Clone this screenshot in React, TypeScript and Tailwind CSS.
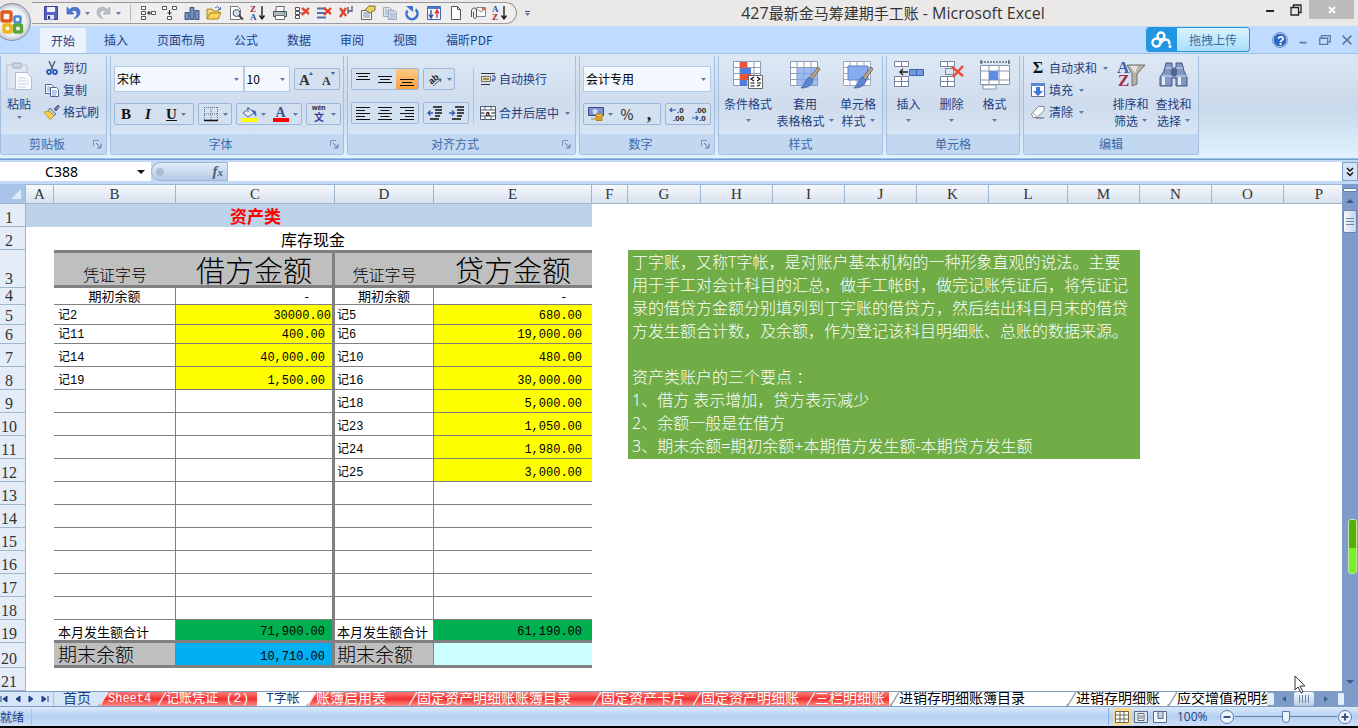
import { useState, type ReactNode } from 'react';

const Svg = ({ children, size = 'size-4', box = '0 0 16 16' }: { children: ReactNode; size?: string; box?: string }) => (
  <svg viewBox={box} className={`${size} shrink-0`} fill="none" aria-hidden="true">{children}</svg>
);

const Caret = () => (
  <svg viewBox="0 0 5 3" className="h-[3px] w-[5px] shrink-0" aria-hidden="true"><path d="M0 0h5L2.5 3z" fill="#5f7aa5" /></svg>
);

/* ---------- quick access icons ---------- */
const SaveIcon = () => <Svg><path d="M1.500 1.500h13v13h-13z" fill="#5a62c0" stroke="#3a3f96" /><path d="M4 2h8v5H4z" fill="#eef2fc" /><path d="M4 10h7v4.500H4z" fill="#dfe4f5" /><path d="M5 11h2v3H5z" fill="#2f3478" /></Svg>;
const UndoIcon = ({ gray }: { gray?: boolean }) => (
  <Svg><g transform={gray ? 'matrix(-1 0 0 1 16 0)' : undefined}><path d="M2 2v7h7L6.500 6.500C9 4.500 12 5.500 12 8.500c0 2-1 3.500-3 5 4-1 6-3 6-6.500C15 2.500 9 .5 4.500 4.500z" fill={gray ? '#b9bfc9' : '#4c78d6'} stroke={gray ? '#9aa2af' : '#2f57ae'} strokeWidth=".6" /></g></Svg>
);
const GroupRightIcon = () => <Svg><path d="M1.500 1.500h4v3h-4zM1.500 6.500h4v3h-4zM1.500 11.500h4v3h-4z" fill="#fff" stroke="#555" /><path d="M11.500 6.500h4v3h-4z" fill="#fff" stroke="#555" /><path d="M7 8h4M9 6v4" stroke="#222" /></Svg>;
const GroupDownIcon = () => <Svg><path d="M.5 1.500h4v3h-4zM10.500 1.500h4v3h-4zM5.500 11.500h4v3h-4z" fill="#fff" stroke="#555" /><path d="M7.500 5v5M5.500 8h4" stroke="#222" /></Svg>;
const ChartIcon = () => <Svg><path d="M1 7.500h4v7H1zM6 2.500h4v12H6zM11 5.500h4v9h-4z" fill="#7590bd" stroke="#3f5a8a" /></Svg>;
const OpenIcon = () => <Svg><path d="M1 14V4h5l1 2h6v3" fill="#f7dc82" stroke="#a8801f" /><path d="M1 14l3-6h11l-3 6z" fill="#ffd65a" stroke="#a8801f" /><path d="M9 3c2-2 4-1 4.500 1M14.500 2v2.500H12" stroke="#3a67b8" /></Svg>;
const PreviewIcon = () => <Svg><path d="M2.500 1.500h7l3 3v10h-10z" fill="#fff" stroke="#777" /><circle cx="8.500" cy="8" r="3.500" fill="#cfe0f5" stroke="#555" /><path d="M11 10.500l4 4" stroke="#444" strokeWidth="2" /></Svg>;
const SortIcon = ({ down }: { down?: boolean }) => (
  <Svg>
    <text x="0" y="7" fontSize="9" fontWeight="bold" fontFamily="Liberation Serif" fill={down ? '#a02340' : '#2b4f9e'}>{down ? 'Z' : 'A'}</text>
    <text x="0" y="15" fontSize="9" fontWeight="bold" fontFamily="Liberation Serif" fill={down ? '#2b4f9e' : '#a02340'}>{down ? 'A' : 'Z'}</text>
    <path d="M12 1v13M9.500 10.500L12 14l2.500-3.500" stroke="#111" strokeWidth="1.300" />
  </Svg>
);
const PrintIcon = () => <Svg><path d="M4.500 1.500h8l-1 5h-8z" fill="#fff" stroke="#666" /><path d="M1.500 6.500h13v5h-13z" fill="#b3bac4" stroke="#4f545c" /><path d="M3.500 10.500h9v4h-9z" fill="#fff" stroke="#666" /><path d="M11 8h2" stroke="#3c3" strokeWidth="1.500" /></Svg>;
const RemoveIcon = ({ kind }: { kind: number }) => (
  <Svg>
    {kind === 0 && <path d="M1.500 2.500h4v3h-4zM1.500 6.500h4v3h-4zM1.500 10.500h4v3h-4zM6 8h4" fill="#fff" stroke="#556" />}
    {kind === 1 && <path d="M1 3.500h9M1 12.500h9M1 8h8" stroke="#4a6fb0" strokeWidth="2" />}
    {kind === 2 && <path d="M10 2v7M10 6h4V1" stroke="#556" strokeWidth="1.300" />}
    <path d={kind === 2 ? 'M2 3l6 8M8 3l-6 9' : 'M8 3l7 6M15 3L8 10'} stroke="#e2452f" strokeWidth="2.400" />
  </Svg>
);
const PropsIcon = () => <Svg><path d="M1.500 5.500h10v9h-10z" fill="#fff" stroke="#666" /><path d="M3 8h7M3 10h7M3 12h7" stroke="#6b84ad" /><path d="M5 5l4-4h6v4l-5 3z" fill="#e8d65c" stroke="#777134" /></Svg>;
const CopyIcon = ({ faded }: { faded?: boolean }) => (
  <Svg>
    <path d="M1.500 2.500h6l2 2v7h-8z" fill={faded ? '#d9e1ec' : '#fff'} stroke={faded ? '#9aa9c0' : '#4c6796'} />
    <path d="M6.500 5.500h6l2 2v7h-8z" fill={faded ? '#cdd7e5' : '#fff'} stroke={faded ? '#9aa9c0' : '#4c6796'} />
    <path d="M8 9h5M8 11h5M8 13h4M3 5h3M3 7h3M3 9h3" stroke={faded ? '#a5b5cd' : '#7b97c6'} />
  </Svg>
);
const RefreshIcon = () => <Svg><path d="M3.500 5.500a5.500 5.500 0 1 0 8-1" stroke="#3c72cf" strokeWidth="2.500" /><path d="M2 1h7v6z" fill="#3c72cf" /></Svg>;
const SwapIcon = () => <Svg><path d="M1.500 1.500h13v13h-13z" fill="#f3f7ff" stroke="#3b68b3" /><path d="M1 2h14v2H1z" fill="#4b7bc9" /><path d="M5 5v7M3 9.500L5 13l2-3.500" stroke="#2b55a5" strokeWidth="1.400" /><path d="M11 13V6M9 8.500L11 5l2 3.500" stroke="#dc3a29" strokeWidth="1.400" /></Svg>;
const NewIcon = () => <Svg><path d="M3.500 1.500h6l3 3v10h-9z" fill="#fff" stroke="#555" /><path d="M9.500 1.500v3h3" stroke="#555" /></Svg>;
const MailIcon = () => <Svg><path d="M6.500 2.500h9v9h-9z" fill="#fff" stroke="#7d8899" /><path d="M7 4l4 3 4-3" stroke="#7d8899" /><path d="M1.500 12V6c0-4 5-4 5 0v6c0 2-3 2-3 0V7" stroke="#555" /><path d="M12 3h3v2h-3z" fill="#df6b4b" /></Svg>;

/* ---------- ribbon icons ---------- */
const PasteIcon = () => <Svg size="h-8 w-7" box="0 0 28 32"><path d="M2 5h20v24H2z" fill="#dfe5ee" stroke="#b6c3d5" /><path d="M8 3h8v5H8z" fill="#cbd6e5" stroke="#9fb0c9" /><path d="M10.500 12.500h11l5 5v12h-16z" fill="#fafcff" stroke="#aebcd0" /><path d="M13 18h8M13 21h11M13 24h11M13 27h8" stroke="#cad4e2" /></Svg>;
const CutIcon = () => <Svg><path d="M5 1l4 9M11 1L7 10" stroke="#51647f" strokeWidth="1.500" /><circle cx="5" cy="12" r="2" stroke="#2c5bb5" strokeWidth="1.800" /><circle cx="11" cy="12" r="2" stroke="#2c5bb5" strokeWidth="1.800" /></Svg>;
const BrushIcon = () => <Svg><path d="M10 5l4-4 1.500 1.500L12 7z" fill="#6d7fae" stroke="#4d5d88" /><path d="M6 4l6 6-3 2-5-5z" fill="#b9c3dc" stroke="#66739a" /><path d="M0 8l5-1 5 5-4 3.500z" fill="#f7d14e" stroke="#b98d1c" strokeWidth=".8" /></Svg>;
const BorderIcon = () => <Svg><path d="M1.500 1v13M8 1v13M14.500 1v13M1 1.500h14M1 8h14" stroke="#60718e" strokeDasharray="1 1" /><path d="M1 14.500h14" stroke="#111" strokeWidth="1.300" /></Svg>;
const FillIcon = () => <Svg><path d="M2 7l6-5 5 5-6 4z" fill="#dfe7f5" stroke="#50658d" /><path d="M7 6V1" stroke="#50658d" /><path d="M11 4c4 0 5 3 4 7-1-3-3-3-4-7z" fill="#3d68b6" /><path d="M0 12h16v4H0z" fill="#ffff00" /></Svg>;
const FontColorIcon = () => <Svg><text x="2.500" y="11" fontSize="14" fontWeight="bold" fontFamily="Liberation Serif" fill="#3b5688">A</text><path d="M0 12h16v4H0z" fill="#ff0000" /></Svg>;
const PhoneticIcon = () => <Svg size="h-5 w-4" box="0 0 16 20"><text x="1" y="6" fontSize="7" fontWeight="bold" fontFamily="Liberation Sans" fill="#223">wén</text><text x="3" y="17" fontSize="10" fontWeight="bold" fontFamily="Noto Sans CJK SC" fill="#3b3fa8">文</text></Svg>;
const LinesIcon = ({ d }: { d: string }) => <Svg><path d={d} stroke="#111" strokeWidth="1.200" /></Svg>;
const OrientIcon = () => <Svg><text x="2" y="11" fontSize="9" fontWeight="bold" fontFamily="Liberation Sans" fill="#222" transform="rotate(-40 7 9)">ab</text><path d="M6 15l8-7M14 8l-3 .5M14 8l-.5 3" stroke="#555" /></Svg>;
const IndentIcon = ({ right }: { right?: boolean }) => (
  <Svg><path d="M6 2h9M8 5h7M8 8h7M8 11h5M3 14h9" stroke="#111" strokeWidth="1.300" /><path d={right ? 'M0 8h5M3 5.500L5.500 8 3 10.500' : 'M1 8h5M3.500 5.500L1 8l2.500 2.500'} stroke="#3a56a8" strokeWidth="1.300" /></Svg>
);
const WrapIcon = () => <Svg><path d="M1 2.500h14M1 13.500h9" stroke="#333" /><path d="M1.500 5.500h9v5h-9z" fill="#f6e39a" stroke="#6a6f78" /><path d="M3 8h6" stroke="#333" /><path d="M12 5h3v4h-3M13.500 7L12 9l1.500 2" stroke="#2f4f92" /></Svg>;
const MergeIcon = () => <Svg><path d="M.5 1.500h15v13H.5zM.5 5h15M.5 11h15M5 1.500V5M11 1.500V5M5 11v3.500M11 11v3.500" fill="#fff" stroke="#4b5b77" /><path d="M1 8h3.500M15 8h-3.500" stroke="#111" /><text x="5.500" y="10.500" fontSize="8" fontWeight="bold" fontFamily="Liberation Sans" fill="#111">a</text></Svg>;
const CurrencyIcon = () => <Svg><path d="M.5 1.500h15v8H.5z" fill="#7d93d0" stroke="#35488c" /><ellipse cx="7" cy="5.500" rx="2.500" ry="2.500" fill="#d3ddf5" /><path d="M8 8h6v6.500H8z" fill="#f3c64a" stroke="#b58115" /><path d="M8 11h6M8 13h6M3 13h4" stroke="#b58115" /></Svg>;
const DecimalIcon = ({ less }: { less?: boolean }) => (
  <Svg>
    <text x={less ? 4 : 8} y="7" fontSize="8" fontWeight="bold" fontFamily="Liberation Sans" fill="#222">{less ? '.00' : '.0'}</text>
    <text x={less ? 8 : 4} y="15" fontSize="8" fontWeight="bold" fontFamily="Liberation Sans" fill="#222">{less ? '.0' : '.00'}</text>
    <path d={less ? 'M1 12h6M5 10l2 2-2 2' : 'M1 4h6M3 2L1 4l2 2'} stroke="#3a56a8" strokeWidth="1.200" />
  </Svg>
);
const grid = 'M1.500 1.500h27v24h-27zM1.500 7.500h27M1.500 13.500h27M1.500 19.500h27M8 1.500v24M15 1.500v24M22 1.500v24';
const CondIcon = () => <Svg size="h-[30px] w-8" box="0 0 32 30"><path d={grid} fill="#fff" stroke="#8d9db8" /><path d="M8 2h7v6H8zM8 14h11v6H8z" fill="#e8553b" /><path d="M8 8h11v6H8zM8 20h7v6H8z" fill="#4e7fdd" /><path d="M16.500 15.500h14v13h-14z" fill="#fff" stroke="#666" /><path d="M22 17l-3 2 3 2M18.500 23h4M18.500 26h4M25 17l3 2-3 2M25 23h4M25 26l3-1" stroke="#111" strokeWidth="1.200" /></Svg>;
const Brush = () => <><path d="M29 7l2 2-8 11-3-2z" fill="#b7a58a" stroke="#665a4c" strokeWidth=".8" /><path d="M20 17l4 3c-1 6-6 8-12 8 4-3 4-8 8-11z" fill="#5b86d6" stroke="#3d5f9f" strokeWidth=".8" /></>;
const TableStyleIcon = () => <Svg size="h-[30px] w-8" box="0 0 32 30"><path d={grid} fill="#fff" stroke="#8d9db8" /><path d="M8 8h20v17H8z" fill="#7fa5ec" fillOpacity=".75" /><Brush /></Svg>;
const CellStyleIcon = () => <Svg size="h-[30px] w-8" box="0 0 32 30"><path d={grid} fill="#fff" stroke="#9aa8c0" /><path d="M6 6h20v14H6z" fill="#86abf0" stroke="#5f83c4" /><Brush /></Svg>;
const InsertIcon = () => <Svg size="h-[30px] w-8" box="0 0 32 30"><path d="M1.500 1.500h14v5h-14zM8.500 1.500v5M1.500 16.500h14v10h-14zM1.500 21.500h14M8.500 16.500v10" fill="#fff" stroke="#75839b" /><path d="M16.500 9.500h14v6h-14zM23.500 9.500v6" fill="#6f9ae8" stroke="#41609c" /><path d="M7 12h8M10 9l-3 3 3 3" stroke="#222" strokeWidth="1.400" /></Svg>;
const DeleteIcon = () => <Svg size="h-[30px] w-8" box="0 0 32 30"><path d="M4.500 1.500h14v5h-14zM11.500 1.500v5M4.500 16.500h14v10h-14zM4.500 21.500h14M11.500 16.500v10" fill="#fff" stroke="#75839b" /><path d="M9.500 8.500h8v6h-8z" stroke="#333" strokeDasharray="1 1" /><path d="M16 7l11 9M27 6L17 17" stroke="#ec4a33" strokeWidth="2.400" /></Svg>;
const FormatIcon = () => <Svg size="h-[30px] w-8" box="0 0 32 30"><path d="M2 2h28" stroke="#333" strokeDasharray="2 1" /><path d="M2 0v4M30 0v4" stroke="#333" /><path d="M1.500 5.500h29v19h-29zM1.500 11h29M1.500 20h29M10 5.500v19M20 5.500v19" fill="#fff" stroke="#8794aa" /><path d="M10 11h9v9h-9z" fill="#5d8ce6" /><path d="M4 25h13v4H4z" fill="#fff" stroke="#8794aa" /></Svg>;
const DownloadIcon = () => <Svg><path d="M1.500 1.500h13v13h-13z" fill="#fff" stroke="#5f7196" /><path d="M1 1h14v3H1z" fill="#5d87d3" /><path d="M6 5h4v4h3l-5 5-5-5h3z" fill="#3d76dc" /></Svg>;
const EraserIcon = () => <Svg><path d="M1.500 10l7-7.500h5.500v4L7 13.500H3z" fill="#fff" stroke="#7d8796" /><path d="M6 14h8" stroke="#555" /><path d="M3 9l4 4" stroke="#9aa5b5" /></Svg>;
const SortFilterIcon = () => <Svg size="h-[30px] w-8" box="0 0 32 30"><text x="2" y="13" fontSize="17" fontWeight="bold" fontFamily="Liberation Serif" fill="#3c5fae">A</text><text x="3" y="26" fontSize="17" fontWeight="bold" fontFamily="Liberation Serif" fill="#a5304c">Z</text><path d="M12 5h18l-8 9v10l-5 2V14z" fill="#b9b4ab" stroke="#75716a" /><path d="M15 6h8l-3 7z" fill="#e7e4de" /></Svg>;
const FindIcon = () => <Svg size="h-[30px] w-8" box="0 0 32 30"><path d="M8 3h6v5h4V3h6l2 8 3 6v9H18v-8h-4v8H2v-9l4-6z" fill="#8098c4" stroke="#41557f" /><path d="M4 17h3v8H4zM20 17h3v8h-3z" fill="#e3ebf8" /><path d="M13 9h6v7h-6z" fill="#50648e" /><path d="M3 16h11M18 16h11M7 8h7M18 8h7" stroke="#d3def0" /></Svg>;
const HelpIcon = () => <Svg><circle cx="8" cy="8" r="7" fill="#2f66c4" stroke="#e7f0ff" /><circle cx="8" cy="8" r="7.500" stroke="#6c90c9" /><text x="5" y="12.500" fontSize="12" fontWeight="bold" fontFamily="Liberation Sans" fill="#fff">?</text></Svg>;
const CloudIcon = () => <Svg size="h-[18px] w-6" box="0 0 24 18"><circle cx="11" cy="5" r="3.500" stroke="#fff" strokeWidth="2.400" /><circle cx="6.500" cy="11.500" r="4" stroke="#fff" strokeWidth="2.400" /><path d="M9 14c2-3 4-5.500 7-5.500 3 0 3.500 2 3.500 5" stroke="#fff" strokeWidth="2.400" /><circle cx="20" cy="15.500" r="1.500" fill="#fff" /></Svg>;

const OfficeOrb = () => (
  <svg viewBox="0 0 40 40" className="size-10" aria-hidden="true">
    <defs><radialGradient id="orb"><stop offset="0" stopColor="#fff" /><stop offset=".75" stopColor="#eceef2" /><stop offset="1" stopColor="#b9c0cc" /></radialGradient></defs>
    <circle cx="20" cy="20" r="18.500" fill="url(#orb)" stroke="#8b94a4" />
    <g fill="none" strokeWidth="3.400">
      <rect x="10" y="10" width="9" height="9" rx="1.500" stroke="#e25a1c" />
      <rect x="22.500" y="14.500" width="6" height="6" rx="1" stroke="#3f86d6" strokeWidth="2.400" />
      <rect x="12" y="23" width="7" height="7" rx="1" stroke="#f2b51e" />
      <rect x="22.500" y="23" width="7" height="7" rx="1" stroke="#5aa637" />
    </g>
  </svg>
);

/* ---------- ribbon pieces ---------- */
const Group = ({ title, width, launcher, children }: { title: string; width: string; launcher?: boolean; children: ReactNode }) => (
  <section aria-label={title} className={`${width} flex shrink-0 flex-col overflow-hidden rounded-b-[3px] border border-t-0 border-[#a5bfdf] bg-linear-to-b from-[#dde8f5] via-[#cfdced] to-[#dce9f8]`}>
    <div className="h-20">{children}</div>
    <div className="flex h-5 items-center bg-[#c1d8f0] text-[#3e6aaa]">
      <span className="flex-1 text-center">{title}</span>
      {launcher && <button aria-label={`${title}设置`} className="pr-1"><Svg size="size-[9px]" box="0 0 9 9"><path d="M.5 6V.5H6" stroke="#7b94b8" /><path d="M3 3l4 4M8 4v4H4" stroke="#5d7aa6" /></Svg></button>}
    </div>
  </section>
);

const Box = ({ children }: { children: ReactNode }) => (
  <div className="flex h-[22px] items-stretch rounded-[2px] border border-[#9db7da] bg-[#d3e0f0]">{children}</div>
);

const Tool = ({ label, caret, active, width = 'w-[22px]', children }: { label: string; caret?: boolean; active?: boolean; width?: string; children: ReactNode }) => (
  <button aria-label={label} className={`${width} flex items-center justify-center gap-1 ${active ? 'bg-linear-to-b from-[#fbc987] to-[#ff9f35]' : ''}`}>{children}{caret && <Caret />}</button>
);

const Row = ({ text, caret, children }: { text: string; caret?: boolean; children: ReactNode }) => (
  <button className="flex h-[22px] items-center gap-[3px] whitespace-nowrap">{children}<span>{text}</span>{caret && <span className="pl-[3px]"><Caret /></span>}</button>
);

const Big = ({ lines, width, children }: { lines: string[]; width: string; children: ReactNode }) => (
  <button className={`${width} flex shrink-0 flex-col items-center whitespace-nowrap pt-1 leading-[17px]`}>
    <span className="pb-[5px]">{children}</span>
    <span>{lines[0]}</span>
    <span className="flex h-[17px] items-center gap-1">{lines[1]}<Caret /></span>
  </button>
);

const Combo = ({ label, value, width }: { label: string; value: string; width: string }) => (
  <label className={`${width} relative flex h-[26px] items-center border border-[#b3c9e6] bg-[#f3f8fe]`}>
    <select aria-label={label} className="h-full w-full appearance-none pl-[2px] text-[12px] text-black outline-none"><option>{value}</option></select>
    <span className="pointer-events-none absolute right-1 flex"><Caret /></span>
  </label>
);

/* ---------- sheet data ---------- */
const columns: [string, string][] = [
  ['A', 'w-[28px]'], ['B', 'w-[122px]'], ['C', 'w-[159px]'], ['D', 'w-[99px]'], ['E', 'w-[158px]'], ['F', 'w-[36px]'],
  ['G', 'w-[73px]'], ['H', 'w-[72px]'], ['I', 'w-[72px]'], ['J', 'w-[72px]'], ['K', 'w-[72px]'], ['L', 'w-[79px]'],
  ['M', 'w-[72px]'], ['N', 'w-[72px]'], ['O', 'w-[72px]'], ['P', ''],
];

// row number, height, B, C, D, E
const entries: [number, string, string, string, string, string][] = [
  [5, 'h-5', '记2', '30000.00', '记5', '680.00'],
  [6, 'h-[19px]', '记11', '400.00', '记6', '19,000.00'],
  [7, 'h-[23px]', '记14', '40,000.00', '记10', '480.00'],
  [8, 'h-[23px]', '记19', '1,500.00', '记16', '30,000.00'],
  [9, 'h-[23px]', '', '', '记18', '5,000.00'],
  [10, 'h-[23px]', '', '', '记23', '1,050.00'],
  [11, 'h-[23px]', '', '', '记24', '1,980.00'],
  [12, 'h-[23px]', '', '', '记25', '3,000.00'],
  [13, 'h-[23px]', '', '', '', ''],
  [14, 'h-[23px]', '', '', '', ''],
  [15, 'h-[23px]', '', '', '', ''],
  [16, 'h-[23px]', '', '', '', ''],
  [17, 'h-[23px]', '', '', '', ''],
  [18, 'h-[23px]', '', '', '', ''],
];

const sheets: { name: string; width: string; tone: 'red' | 'plain' | 'active' | 'white'; size?: string }[] = [
  { name: '首页', width: 'w-[44px]', tone: 'plain' },
  { name: 'Sheet4', width: 'w-[58px]', tone: 'red', size: 'text-[12px]' },
  { name: '记账凭证 (2)', width: 'w-[101px]', tone: 'red', size: 'text-[13px]' },
  { name: 'T字帐', width: 'w-[49px]', tone: 'active', size: 'text-[13px]' },
  { name: '账簿启用表', width: 'w-[101px]', tone: 'red' },
  { name: '固定资产明细账账簿目录', width: 'w-[184px]', tone: 'red' },
  { name: '固定资产卡片', width: 'w-[100px]', tone: 'red' },
  { name: '固定资产明细账', width: 'w-[114px]', tone: 'red' },
  { name: '三栏明细账', width: 'w-[84px]', tone: 'red' },
  { name: '进销存明细账簿目录', width: 'w-[177px]', tone: 'white' },
  { name: '进销存明细账', width: 'w-[101px]', tone: 'white' },
  { name: '应交增值税明细账', width: 'w-[100px]', tone: 'white' },
];

const tones = {
  red: 'bg-linear-to-b from-[#ff7b76] via-[#f02a30] to-[#ff8a84] text-white',
  plain: 'bg-[#d6e6f8] text-[#1e3a78]',
  active: 'bg-white text-[#1e3a78]',
  white: 'bg-white text-black',
};

const RowHead = ({ n }: { n: number }) => (
  <th scope="row" className="border-r border-b border-[#9eb6ce] bg-[#e4ecf7] pr-[7px] text-center align-bottom font-['Liberation_Serif'] text-[16px] leading-4 font-normal text-[#333]">{n}</th>
);

const Rest = () => <td colSpan={11} />;

const line = 'border-b border-[#808080]';
const label = "align-bottom font-['Liberation_Mono','Noto_Sans_CJK_SC',monospace] text-[12px] leading-4 whitespace-nowrap";

export default function App() {
  const [tab, setTab] = useState('开始');
  const [sheet, setSheet] = useState('T字帐');
  const [zoom, setZoom] = useState(100);
  const [formula, setFormula] = useState('');

  return (
    <div className="relative flex h-screen min-h-[480px] flex-col overflow-hidden bg-[#bfdbff] font-['Noto_Sans_CJK_SC',sans-serif] text-[12px] leading-4 text-[#1e3f80]">
      {/* title bar */}
      <header className="flex h-[26px] shrink-0 items-center bg-[#ebe8e8]">
        <div className="ml-8 flex h-[22px] shrink-0 items-center rounded-r-full border border-l-0 border-[#9a9a9e] bg-[#efeded] pr-2 pl-[11px]">
          <div className="flex items-center gap-[6px]">
            <button aria-label="保存"><SaveIcon /></button>
            <button aria-label="撤消" className="flex items-center gap-1"><UndoIcon /><Caret /></button>
            <button aria-label="恢复" className="flex items-center gap-1"><UndoIcon gray /><Caret /></button>
            <span className="mx-[3px] h-4 w-px bg-[#b5b5bb]" />
            {[<GroupRightIcon />, <GroupDownIcon />, <ChartIcon />, <OpenIcon />, <PreviewIcon />, <SortIcon down />, <PrintIcon />, <RemoveIcon kind={0} />, <RemoveIcon kind={1} />, <RemoveIcon kind={2} />, <PropsIcon />, <CopyIcon faded />, <RefreshIcon />, <SwapIcon />, <NewIcon />, <MailIcon />, <SortIcon />].map((icon, i) => (
              <button key={i} aria-label={`快速访问 ${i + 1}`}>{icon}</button>
            ))}
          </div>
        </div>
        <button aria-label="自定义快速访问工具栏" className="flex flex-col gap-px pl-2"><span className="h-px w-[5px] bg-[#33508a]" /><Caret /></button>
        <h1 className="flex-1 pl-[104px] text-center font-['Open_Sans','Noto_Sans_CJK_SC',sans-serif] text-[16px] whitespace-nowrap text-[#333]">427<span className="text-[15px]">最新金马筹建期手工账</span> - Microsoft Excel</h1>
        <div className="flex w-[206px] shrink-0 items-start justify-end self-start pr-1">
          <button aria-label="最小化" className="flex h-5 w-[26px] items-center justify-center"><Svg size="size-3" box="0 0 12 12"><path d="M2 7h8" stroke="#222" strokeWidth="2" /></Svg></button>
          <button aria-label="还原" className="flex h-5 w-[26px] items-center justify-center"><Svg size="size-3" box="0 0 12 12"><path d="M1 3.500h7.500V11H1zM3.500 3V1H11v7.500H9" stroke="#222" strokeWidth="1.300" /></Svg></button>
          <button aria-label="关闭" className="flex h-[19px] w-[45px] items-center justify-center bg-[#bcbcbc]"><Svg size="size-2" box="0 0 8 8"><path d="M1 1l6 6M7 1L1 7" stroke="#fff" strokeWidth="1.800" /></Svg></button>
        </div>
      </header>

      <button aria-label="Office 按钮" className="absolute top-0.5 -left-2"><OfficeOrb /></button>

      {/* ribbon tabs */}
      <nav className="flex h-[27px] shrink-0 items-end gap-[5px] pl-[39px]">
        {['开始', '插入', '页面布局', '公式', '数据', '审阅', '视图', '福昕PDF'].map(t => (
          <button key={t} onClick={() => setTab(t)} className={`h-[26px] shrink-0 ${t === tab ? 'rounded-t-[3px] border border-b-0 border-[#c9dcf5] bg-[#e9f2fd] px-[11px]' : 'px-3'}`}>{t}</button>
        ))}
        <div className="flex flex-1 items-center justify-end self-center pr-1">
          <button className="flex h-[25px] items-center overflow-hidden rounded-[3px] border border-[#2b95da] bg-linear-to-b from-[#d9f2ff] to-[#a9defc]">
            <span className="flex h-full w-[30px] items-center justify-center bg-[#2196e3]"><CloudIcon /></span>
            <span className="w-[72px] text-[#3b6d9d]">拖拽上传</span>
          </button>
          <button aria-label="帮助" className="ml-[22px]"><HelpIcon /></button>
          <button aria-label="最小化工作簿" className="ml-2"><Svg size="size-3.5"><path d="M4 11h8" stroke="#5a78a8" strokeWidth="2" /></Svg></button>
          <button aria-label="还原工作簿" className="ml-2"><Svg size="size-3.5"><path d="M2 6h9v7H2zM4 5V3h10v7h-2" stroke="#5a78a8" strokeWidth="1.500" /></Svg></button>
          <button aria-label="关闭工作簿" className="ml-2"><Svg size="size-3.5"><path d="M3 3l10 10M13 3L3 13" stroke="#5a78a8" strokeWidth="1.800" /></Svg></button>
        </div>
      </nav>

      {/* ribbon */}
      <div className="flex h-[106px] shrink-0 gap-[3px] border-y border-[#9fc0e8] bg-linear-to-b from-[#dce7f4] via-[#c9d8ea] to-[#e2f1ff] pt-[2px] pb-[3px]">
        <Group title="剪贴板" width="w-[107px]" launcher>
          <div className="flex pl-1">
            <button className="flex w-7 flex-col items-center gap-1 pt-1"><PasteIcon /><span>粘贴</span><Caret /></button>
            <div className="flex flex-col items-start pt-px pl-[11px]">
              <Row text="剪切"><CutIcon /></Row>
              <Row text="复制"><CopyIcon /></Row>
              <Row text="格式刷"><BrushIcon /></Row>
            </div>
          </div>
        </Group>

        <Group title="字体" width="w-[234px]" launcher>
          <div className="flex flex-col gap-[11px] px-[3px] pt-[10px]">
            <div className="flex items-center">
              <Combo label="字体名称" value="宋体" width="w-[131px]" />
              <Combo label="字号" value="10" width="w-[47px]" />
              <div className="ml-1"><Box>
                <Tool label="增大字号"><Svg><text x="1" y="14" fontSize="15" fontWeight="bold" fontFamily="Liberation Serif" fill="#333">A</text><path d="M11 4l2-3 2 3z" fill="#3b5ea8" /></Svg></Tool>
                <Tool label="减小字号"><Svg><text x="2" y="14" fontSize="12" fontWeight="bold" fontFamily="Liberation Serif" fill="#333">A</text><path d="M11 1l2 3 2-3z" fill="#3b5ea8" /></Svg></Tool>
              </Box></div>
            </div>
            <div className="flex gap-1 font-['Liberation_Serif'] text-[15px] text-[#111]">
              <Box>
                <Tool label="加粗"><b>B</b></Tool>
                <Tool label="倾斜"><b><i>I</i></b></Tool>
                <Tool label="下划线" caret width="w-[34px]"><b className="underline">U</b></Tool>
              </Box>
              <Box><Tool label="边框" caret width="w-[32px]"><BorderIcon /></Tool></Box>
              <Box>
                <Tool label="填充颜色" caret width="w-[32px]"><FillIcon /></Tool>
                <Tool label="字体颜色" caret width="w-[32px]"><FontColorIcon /></Tool>
              </Box>
              <Box><Tool label="拼音" caret width="w-[33px]"><PhoneticIcon /></Tool></Box>
            </div>
          </div>
        </Group>

        <Group title="对齐方式" width="w-[229px]" launcher>
          <div className="flex px-[3px] pt-3">
            <div className="flex flex-col gap-3">
              <div className="flex gap-1">
                <Box>
                  <Tool label="顶端对齐"><LinesIcon d="M1 2.500h14M3 5.500h10M1 8.500h14" /></Tool>
                  <Tool label="垂直居中"><LinesIcon d="M1 5.500h14M3 8.500h10M1 11.500h14" /></Tool>
                  <Tool label="底端对齐" active><LinesIcon d="M1 8.500h14M3 11.500h10M1 14.500h14" /></Tool>
                </Box>
                <Box><Tool label="方向" caret width="w-[30px]"><OrientIcon /></Tool></Box>
              </div>
              <div className="flex gap-1">
                <Box>
                  <Tool label="左对齐"><LinesIcon d="M1 2.500h14M1 5.500h9M1 8.500h14M1 11.500h9M1 14.500h14" /></Tool>
                  <Tool label="居中"><LinesIcon d="M1 2.500h14M3.500 5.500h9M1 8.500h14M3.500 11.500h9M1 14.500h14" /></Tool>
                  <Tool label="右对齐"><LinesIcon d="M1 2.500h14M6 5.500h9M1 8.500h14M6 11.500h9M1 14.500h14" /></Tool>
                </Box>
                <Box><Tool label="减少缩进"><IndentIcon /></Tool><Tool label="增加缩进"><IndentIcon right /></Tool></Box>
              </div>
            </div>
            <div className="ml-1 flex flex-col gap-3 border-l border-[#aac3e2] pl-[6px]">
              <Row text="自动换行"><WrapIcon /></Row>
              <Row text="合并后居中" caret><MergeIcon /></Row>
            </div>
          </div>
        </Group>

        <Group title="数字" width="w-[136px]" launcher>
          <div className="flex flex-col gap-[11px] px-[3px] pt-[10px]">
            <Combo label="数字格式" value="会计专用" width="w-full" />
            <div className="flex gap-1 text-[14px] text-[#222]">
              <Box>
                <Tool label="会计数字格式" caret width="w-[32px]"><CurrencyIcon /></Tool>
                <Tool label="百分比">%</Tool>
                <Tool label="千位分隔"><b className="font-['Liberation_Serif'] text-[18px] leading-3">,</b></Tool>
              </Box>
              <Box><Tool label="增加小数位数"><DecimalIcon /></Tool><Tool label="减少小数位数"><DecimalIcon less /></Tool></Box>
            </div>
          </div>
        </Group>

        <Group title="样式" width="w-[165px]">
          <div className="flex pl-px">
            <Big lines={['条件格式', '']} width="w-[56px]"><CondIcon /></Big>
            <Big lines={['套用', '表格格式']} width="w-[58px]"><TableStyleIcon /></Big>
            <Big lines={['单元格', '样式']} width="w-[48px]"><CellStyleIcon /></Big>
          </div>
        </Group>

        <Group title="单元格" width="w-[134px]">
          <div className="flex">
            <Big lines={['插入', '']} width="w-[43px]"><InsertIcon /></Big>
            <Big lines={['删除', '']} width="w-[43px]"><DeleteIcon /></Big>
            <Big lines={['格式', '']} width="w-[43px]"><FormatIcon /></Big>
          </div>
        </Group>

        <Group title="编辑" width="w-[176px]">
          <div className="flex pl-1.5">
            <div className="flex w-[79px] flex-col items-start pt-px">
              <Row text="自动求和" caret><b className="w-4 text-center font-['Liberation_Serif'] text-[16px] text-[#111]">Σ</b></Row>
              <Row text="填充" caret><DownloadIcon /></Row>
              <Row text="清除" caret><EraserIcon /></Row>
            </div>
            <Big lines={['排序和', '筛选']} width="w-[43px]"><SortFilterIcon /></Big>
            <Big lines={['查找和', '选择']} width="w-[43px]"><FindIcon /></Big>
          </div>
        </Group>
      </div>

      {/* formula bar */}
      <div className="flex h-[25px] shrink-0 items-stretch border-t border-[#6f9bd0] bg-[#c3d9f5] pt-[2px] pb-[3px]">
        <div className="flex w-[151px] items-center bg-white pr-[6px]">
          <input aria-label="名称框" defaultValue="C388" className="w-full min-w-0 bg-transparent pr-[14px] text-center font-['Noto_Sans',sans-serif] text-[14px] text-black outline-none" />
          <Svg size="h-1 w-2" box="0 0 8 4"><path d="M0 0h8L4 4z" fill="#111" /></Svg>
        </div>
        <div className="flex w-[77px] items-center justify-between rounded-l-full border border-[#9cb5d6] bg-linear-to-b from-[#e3ecf8] to-[#b6cbe6] pr-1 pl-1">
          <span className="size-2 rounded-full bg-[#b0bdd0]" />
          <button aria-label="插入函数" className="font-['Liberation_Serif'] text-[15px] font-bold text-[#4e5d75] italic">f<span className="text-[11px]">x</span></button>
        </div>
        <input aria-label="编辑栏" value={formula} onChange={e => setFormula(e.target.value)} className="min-w-0 flex-1 bg-white px-1 text-black outline-none" />
        <button aria-label="展开编辑栏" className="flex w-4 items-center justify-center border border-[#7ea2d0] bg-[#d4e4f8]"><Svg size="size-2.5" box="0 0 10 10"><path d="M2 1l3 3 3-3M2 5.500l3 3 3-3" stroke="#111" strokeWidth="1.500" /></Svg></button>
      </div>

      {/* worksheet */}
      <main className="flex min-h-0 flex-1">
        <div className="relative min-w-0 flex-1 overflow-hidden bg-white">
          <table className="w-full table-fixed border-separate border-spacing-0 text-black">
            <colgroup>
              <col className="w-[26px]" />
              {columns.map(([c, w]) => <col key={c} className={w} />)}
            </colgroup>
            <thead>
              <tr className="h-5">
                <th className="border-r border-b border-[#9eb6ce] bg-[#a9c4e9]"><span className="flex justify-end pr-1"><Svg size="size-2.5" box="0 0 10 10"><path d="M10 0v10H0z" fill="#dfeaf8" /></Svg></span></th>
                {columns.map(([c]) => (
                  <th key={c} scope="col" className={`border-t border-b border-[#9eb6ce] bg-linear-to-b from-[#f6f9fd] to-[#d7e1ee] p-0 font-['Liberation_Serif'] text-[15px] leading-[18px] font-normal text-[#333] ${c === 'P' ? 'pl-3' : 'border-r'}`}>{c}</th>
                ))}
              </tr>
            </thead>
            <tbody>
              <tr className="h-[23px]">
                <RowHead n={1} />
                <td colSpan={2} className="bg-[#bdd3ea]" />
                <td className="bg-[#bdd3ea] text-center text-[17px] leading-[22px] font-bold text-[#ff0000]">资产类</td>
                <td colSpan={2} className="bg-[#bdd3ea]" />
                <Rest />
              </tr>
              <tr className="h-[23px]">
                <RowHead n={2} />
                <td colSpan={5} className="pl-2 text-center text-[16px] leading-[22px]">库存现金</td>
                <Rest />
              </tr>
              <tr className="h-[38px] bg-[#bfbfbf]">
                <RowHead n={3} />
                <td className="bg-white" />
                <td className="border-y-3 border-[#808080] text-center align-bottom text-[16px] leading-[22px] font-light">凭证字号</td>
                <td className="border-y-3 border-r-3 border-[#808080] text-center align-bottom text-[29px] leading-8 font-light">借方金额</td>
                <td className="border-y-3 border-[#808080] text-center align-bottom text-[16px] leading-[22px] font-light">凭证字号</td>
                <td className="border-y-3 border-[#808080] text-center align-bottom text-[29px] leading-8 font-light">贷方金额</td>
                <td colSpan={11} className="bg-white" />
              </tr>
              <tr className="h-[17px]">
                <RowHead n={4} />
                <td />
                <td className={`${line} border-r text-center text-[13px] leading-4`}>期初余额</td>
                <td className={`${line} border-r-3 pr-[23px] text-right text-[13px] leading-4`}>-</td>
                <td className={`${line} border-r text-center text-[13px] leading-4`}>期初余额</td>
                <td className={`${line} pr-[26px] text-right text-[13px] leading-4`}>-</td>
                <Rest />
              </tr>
              {entries.map(([n, h, b, c, d, e]) => (
                <tr key={n} className={h}>
                  <RowHead n={n} />
                  <td />
                  <td className={`${label} ${line} border-r pl-1`}>{b}</td>
                  <td className={`${label} ${line} border-r-3 text-right ${c ? 'bg-[#ffff00]' : ''} ${n === 5 ? 'pr-px' : 'pr-[7px]'}`}>{c}</td>
                  <td className={`${label} ${line} border-r pl-[2px]`}>{d}</td>
                  <td className={`${label} ${line} pr-2.5 text-right ${e ? 'bg-[#ffff00]' : ''}`}>{e}</td>
                  <Rest />
                </tr>
              ))}
              <tr className="h-[23px]">
                <RowHead n={19} />
                <td />
                <td className="border-r border-b-3 border-[#808080] pl-1 align-bottom text-[13px] leading-4">本月发生额合计</td>
                <td className={`${label} border-r-3 border-b-3 border-[#808080] bg-[#00b050] pr-[7px] text-right`}>71,900.00</td>
                <td className="border-r border-b-3 border-[#808080] pl-[2px] align-bottom text-[13px] leading-4 whitespace-nowrap">本月发生额合计</td>
                <td className={`${label} border-b-3 border-[#808080] bg-[#00b050] pr-2.5 text-right`}>61,190.00</td>
                <Rest />
              </tr>
              <tr className="h-[25px]">
                <RowHead n={20} />
                <td />
                <td className="border-r border-b-3 border-[#808080] bg-[#bfbfbf] pl-1 text-[19px] leading-[22px] font-light">期末余额</td>
                <td className={`${label} border-r-3 border-b-3 border-[#808080] bg-[#00b0f0] pr-[7px] text-right`}>10,710.00</td>
                <td className="border-r border-b-3 border-[#808080] bg-[#bfbfbf] pl-[2px] text-[19px] leading-[22px] font-light">期末余额</td>
                <td className="border-b-3 border-[#808080] bg-[#ccffff]" />
                <Rest />
              </tr>
              <tr className="h-[23px]">
                <RowHead n={21} />
                <td colSpan={5} />
                <Rest />
              </tr>
            </tbody>
          </table>

          {/* text box floating over the cells */}
          <div className="absolute top-[66px] left-[628px] w-[512px] bg-[#70ad47] px-1 py-px font-['Noto_Sans','Noto_Sans_CJK_SC',sans-serif] text-[16px] leading-[23px] font-light text-white">
            <p>丁字账，又称T字帐，是对账户基本机构的一种形象直观的说法。主要用于手工对会计科目的汇总，做手工帐时，做完记账凭证后，将凭证记录的借贷方金额分别填列到丁字账的借贷方，然后结出科目月末的借贷方发生额合计数，及余额，作为登记该科目明细账、总账的数据来源。</p>
            <p className="pt-[23px]">资产类账户的三个要点 ：</p>
            <p>1、借方 表示增加，贷方表示减少</p>
            <p>2、余额一般是在借方</p>
            <p>3、期末余额=期初余额+本期借方发生额-本期贷方发生额</p>
          </div>
        </div>

        <div className="relative flex w-4 shrink-0 flex-col items-center bg-[#7d9ac8]">
          <span className="mt-1 h-1 w-3.5 rounded-[1px] border border-[#5f80b3] bg-white" />
          <button aria-label="向上滚动" className="flex h-[18px] items-center"><Svg size="h-1 w-2" box="0 0 8 4"><path d="M0 4h8L4 0z" fill="#3d5a8c" /></Svg></button>
          <span className="flex h-[23px] w-3.5 flex-col items-center justify-center gap-[2px] rounded-[2px] border border-[#6985b5] bg-linear-to-r from-[#f4f8fd] to-[#c5d5ea]">
            <i className="h-px w-2 bg-[#6b83ab]" /><i className="h-px w-2 bg-[#6b83ab]" /><i className="h-px w-2 bg-[#6b83ab]" />
          </span>
          <span className="flex-1" />
          <button aria-label="向下滚动" className="flex h-[18px] items-center"><Svg size="h-1 w-2" box="0 0 8 4"><path d="M0 0h8L4 4z" fill="#3d5a8c" /></Svg></button>
          <span className="absolute top-[335px] right-px flex h-[55px] w-[9px] flex-col overflow-hidden rounded-[3px] border border-[#c4e6b0] bg-[#76f022]"><i className="h-7 bg-[#56ae08]" /></span>
        </div>
      </main>

      {/* sheet tabs */}
      <div className="flex h-4 shrink-0 items-stretch overflow-hidden border-t border-b border-[#7f9cc4] bg-[#d6e6f8] font-['Liberation_Mono','Noto_Sans_CJK_SC',monospace]">
        <div className="flex w-[54px] shrink-0 items-center justify-between border-r border-[#a9c0de] pr-1">
          {['M1 1v6M7 1L3 4l4 3z', 'M6 1L2 4l4 3z', 'M2 1l4 3-4 3z', 'M1 1l4 3-4 3zM7 1v6'].map(d => (
            <button key={d} aria-label="切换工作表"><Svg size="size-2" box="0 0 8 8"><path d={d} fill="#1f3f86" stroke="#1f3f86" /></Svg></button>
          ))}
        </div>
        <div className="flex min-w-0 flex-1 overflow-hidden">
          {sheets.map(({ name, width, tone, size }) => (
            <button key={name} onClick={() => setSheet(name)} aria-pressed={sheet === name} className={`${width} ${tones[tone]} flex shrink-0 items-center overflow-hidden whitespace-nowrap ${size ?? 'text-[14px]'}`}>
              {name === '首页' || tone === 'active' ? <span className="w-[9px] shrink-0" /> : (
                <Svg size="h-[15px] w-2.5" box="0 0 10 15"><path d="M0 0h10L0 15z" fill={name === 'Sheet4' ? '#d6e6f8' : name === '账簿启用表' ? '#fff' : 'none'} /><path d="M10 0L1 15" stroke={tone === 'red' ? '#f4eef0' : '#8f9bb0'} strokeWidth="1.300" /><path d="M0 15h3L1 11z" fill="#8fa6c8" /></Svg>
              )}
              {name}
            </button>
          ))}
        </div>
        <div className="flex w-[90px] shrink-0 items-center bg-[#7d9ac8]">
          <span className="h-3 w-1.5 rounded-[1px] bg-[#e3eefb]" />
          <button aria-label="向左滚动" className="px-1.5"><Svg size="size-2" box="0 0 8 8"><path d="M6 1L2 4l4 3z" fill="#3d5a8c" /></Svg></button>
          <span className="flex h-3.5 w-5 items-center justify-center gap-[2px] rounded-[2px] bg-linear-to-b from-[#f6f9fd] to-[#b9cbe4]">
            <i className="h-2 w-px bg-[#6b83ab]" /><i className="h-2 w-px bg-[#6b83ab]" /><i className="h-2 w-px bg-[#6b83ab]" /><i className="h-2 w-px bg-[#6b83ab]" />
          </span>
          <button aria-label="向右滚动" className="px-2"><Svg size="size-2" box="0 0 8 8"><path d="M2 1l4 3-4 3z" fill="#3d5a8c" /></Svg></button>
          <span className="h-3 w-1.5 rounded-[1px] bg-[#e3eefb]" />
        </div>
      </div>

      {/* mouse pointer */}
      <svg viewBox="0 0 12 19" className="pointer-events-none absolute right-[52px] bottom-[34px] h-[19px] w-3" aria-hidden="true"><path d="M1 1v14l3-3 3 6 2-1-3-6h5z" fill="#fff" stroke="#333" /></svg>

      {/* status bar */}
      <footer className="flex h-[21px] shrink-0 items-center border-b-2 border-black bg-linear-to-b from-[#dbe9fb] via-[#b5d0f2] to-[#cfdff8]">
        <span className="w-8 border-r border-[#a5bfdf]">就绪</span>
        <span className="flex-1" />
        <div className="flex items-center gap-px border-l border-[#8fb0dc] pl-1">
          <button aria-label="普通" className="flex h-[17px] w-[18px] items-center justify-center bg-[#ffd88c]"><Svg size="h-3 w-3.5" box="0 0 14 12"><path d="M.5.5h13v11H.5zM.5 4h13M.5 8h13M5 .5v11M9 .5v11" fill="#fff" stroke="#6d6a52" /></Svg></button>
          <button aria-label="页面布局视图" className="flex h-[17px] w-[18px] items-center justify-center"><Svg size="h-3 w-3.5" box="0 0 14 12"><path d="M.5.5h13v11H.5z" fill="#dfe7f2" stroke="#5d6b82" /><path d="M4 2.500h6v7H4zM5 5h4M5 7h4" fill="#fff" stroke="#5d6b82" /></Svg></button>
          <button aria-label="分页预览" className="flex h-[17px] w-[18px] items-center justify-center"><Svg size="h-3 w-3.5" box="0 0 14 12"><path d="M.5.5h13v11H.5zM5 .5v7h5v-7" fill="#f3f6fb" stroke="#5d6b82" /></Svg></button>
        </div>
        <span className="w-[50px] pl-2 font-['Open_Sans',sans-serif] text-[12px]">{zoom}%</span>
        <button aria-label="缩小" onClick={() => setZoom(z => Math.max(10, z - 10))}><Svg><circle cx="8" cy="8" r="6.500" fill="#eef4fc" stroke="#5f7ca8" /><path d="M4.500 8h7" stroke="#3a5585" strokeWidth="2" /></Svg></button>
        <input aria-label="显示比例" type="range" min="10" max="190" value={zoom} onChange={e => setZoom(Number(e.target.value))} className="h-4 w-[102px] appearance-none bg-[linear-gradient(#6884b0,#6884b0)] bg-size-[100%_1px] bg-center bg-no-repeat [&::-webkit-slider-thumb]:h-3 [&::-webkit-slider-thumb]:w-2 [&::-webkit-slider-thumb]:appearance-none [&::-webkit-slider-thumb]:rounded-b-full [&::-webkit-slider-thumb]:border [&::-webkit-slider-thumb]:border-[#5f7ca8] [&::-webkit-slider-thumb]:bg-[#eef4fc]" />
        <button aria-label="放大" onClick={() => setZoom(z => Math.min(190, z + 10))} className="pr-[5px]"><Svg><circle cx="8" cy="8" r="6.500" fill="#eef4fc" stroke="#5f7ca8" /><path d="M4.500 8h7M8 4.500v7" stroke="#3a5585" strokeWidth="2" /></Svg></button>
      </footer>
    </div>
  );
}
